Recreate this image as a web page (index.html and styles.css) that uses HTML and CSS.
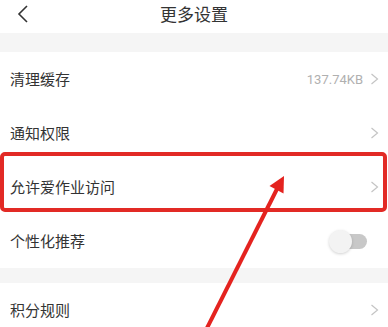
FILE: index.html
```html
<!DOCTYPE html>
<html lang="zh-CN">
<head>
<meta charset="utf-8">
<title>更多设置</title>
<link rel="stylesheet" href="styles.css">
</head>
<body>
<div class="page">
  <header class="header">
    <svg class="back" width="12" height="18" viewBox="0 0 12 18"><polyline points="10,1 2,9 10,17" fill="none" stroke="#333" stroke-width="1.6" stroke-linejoin="miter"/></svg>
    <h1 class="title">更多设置</h1>
  </header>
  <div class="band"></div>
  <div class="row">
    <span class="label">清理缓存</span>
    <span class="right"><span class="value">137.74KB</span><svg class="chev" width="9" height="12" viewBox="0 0 9 12"><polyline points="1.5,1 7.5,6 1.5,11" fill="none" stroke="#c4c4c4" stroke-width="1.2"/></svg></span>
  </div>
  <div class="row">
    <span class="label">通知权限</span>
    <span class="right"><svg class="chev" width="9" height="12" viewBox="0 0 9 12"><polyline points="1.5,1 7.5,6 1.5,11" fill="none" stroke="#c4c4c4" stroke-width="1.2"/></svg></span>
  </div>
  <div class="row">
    <span class="label">允许爱作业访问</span>
    <span class="right"><svg class="chev" width="9" height="12" viewBox="0 0 9 12"><polyline points="1.5,1 7.5,6 1.5,11" fill="none" stroke="#c4c4c4" stroke-width="1.2"/></svg></span>
  </div>
  <div class="row">
    <span class="label">个性化推荐</span>
    <span class="toggle"><span class="knob"></span></span>
  </div>
  <div class="band band2"></div>
  <div class="row">
    <span class="label">积分规则</span>
    <span class="right"><svg class="chev" width="9" height="12" viewBox="0 0 9 12"><polyline points="1.5,1 7.5,6 1.5,11" fill="none" stroke="#c4c4c4" stroke-width="1.2"/></svg></span>
  </div>

  <div class="highlight"></div>
  <svg class="arrow" width="388" height="327" viewBox="0 0 388 327">
    <line x1="205" y1="332" x2="278" y2="187" stroke="#e4231f" stroke-width="4"/>
    <polygon points="284,176 269.5,186 283.5,193.5" fill="#e4231f"/>
  </svg>
</div>
</body>
</html>
```
FILE: styles.css
```css
html, body {
  margin: 0;
  padding: 0;
  background: #ffffff;
}
.page {
  position: relative;
  width: 388px;
  height: 327px;
  overflow: hidden;
  font-family: "Noto Sans CJK SC", "Noto Sans", sans-serif;
  color: #333333;
}
.header {
  height: 33px;
  display: flex;
  align-items: flex-start;
  justify-content: center;
  position: relative;
}
.back {
  position: absolute;
  left: 17px;
  top: 5px;
}
.title {
  margin: 0;
  font-size: 17px;
  font-weight: 400;
  line-height: 28px;
  color: #333333;
}
.band {
  height: 19px;
  background: #f5f5f5;
}
.band2 {
  height: 15px;
}
.row {
  height: 54px;
  display: flex;
  align-items: center;
  justify-content: space-between;
  padding: 0 9px 0 10px;
}
.label {
  font-size: 15px;
  line-height: 20px;
  color: #333333;
}
.right {
  display: flex;
  align-items: center;
  gap: 7px;
}
.value {
  font-family: Roboto, "Noto Sans", sans-serif;
  font-size: 13px;
  color: #b0b0b0;
}
.chev {
  display: block;
}
.toggle {
  position: relative;
  width: 37px;
  height: 15px;
  margin-right: 12px;
  border-radius: 8px;
  background: #c8c8c8;
}
.knob {
  position: absolute;
  left: -1px;
  top: -4px;
  width: 23px;
  height: 23px;
  border-radius: 50%;
  background: #f3f3f3;
  box-shadow: 0 1px 3px rgba(0, 0, 0, 0.18);
}
.highlight {
  position: absolute;
  left: 0;
  top: 152px;
  width: 387px;
  height: 60px;
  box-sizing: border-box;
  border: 4px solid #e22a25;
  border-radius: 5px;
}
.arrow {
  position: absolute;
  left: 0;
  top: 0;
}
```
